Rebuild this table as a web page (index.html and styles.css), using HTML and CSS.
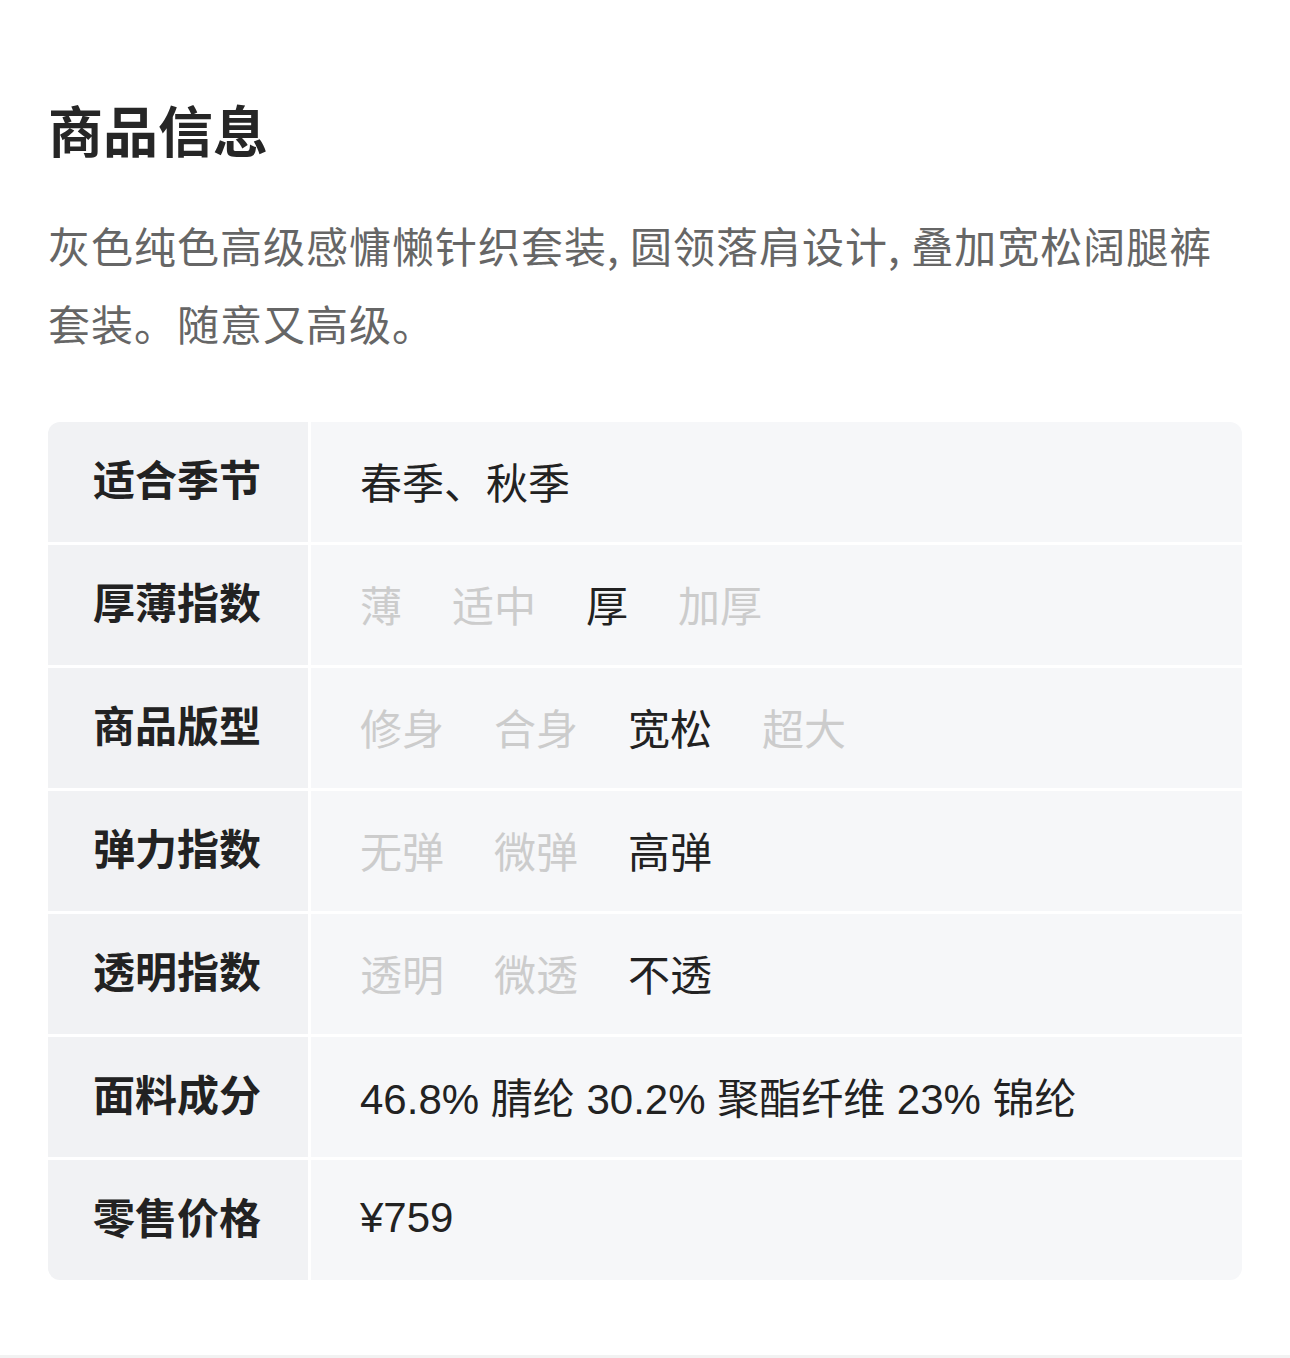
FILE: index.html
```html
<!DOCTYPE html>
<html lang="zh-CN">
<head>
<meta charset="utf-8">
<title>商品信息</title>
<link rel="stylesheet" href="styles.css">
</head>
<body>
<main class="page">
  <h1 class="title">商品信息</h1>
  <p class="desc">灰色纯色高级感慵懒针织套装, 圆领落肩设计, 叠加宽松阔腿裤套装。随意又高级。</p>
  <div class="table">
    <div class="label">适合季节</div>
    <div class="value">春季、秋季</div>

    <div class="label">厚薄指数</div>
    <div class="value options">
      <span class="opt">薄</span><span class="opt">适中</span><span class="opt on">厚</span><span class="opt">加厚</span>
    </div>

    <div class="label">商品版型</div>
    <div class="value options">
      <span class="opt">修身</span><span class="opt">合身</span><span class="opt on">宽松</span><span class="opt">超大</span>
    </div>

    <div class="label">弹力指数</div>
    <div class="value options">
      <span class="opt">无弹</span><span class="opt">微弹</span><span class="opt on">高弹</span>
    </div>

    <div class="label">透明指数</div>
    <div class="value options">
      <span class="opt">透明</span><span class="opt">微透</span><span class="opt on">不透</span>
    </div>

    <div class="label">面料成分</div>
    <div class="value latin">46.8% 腈纶 30.2% 聚酯纤维 23% 锦纶</div>

    <div class="label">零售价格</div>
    <div class="value latin">¥759</div>
  </div>
  <div class="divider"></div>
</main>
</body>
</html>
```

FILE: styles.css
```css
html, body {
  margin: 0;
  padding: 0;
  background: #ffffff;
}

body {
  font-family: "Noto Sans CJK SC", "Noto Sans", sans-serif;
  color: #222222;
}

.page {
  padding: 96px 0 0;
}

.title {
  margin: 0 48px;
  font-size: 55px;
  line-height: 64px;
  font-weight: 700;
  color: #262626;
}

.desc {
  margin: 46px 48px 0;
  font-size: 42px;
  line-height: 78px;
  letter-spacing: 1px;
  color: #666666;
}

.table {
  margin: 60px 48px 0;
  display: grid;
  grid-template-columns: 260px 1fr;
  grid-auto-rows: 120px;
  gap: 3px;
  border-radius: 12px;
  overflow: hidden;
  background: #ffffff;
}

.label {
  background: #f1f2f4;
  display: flex;
  align-items: center;
  padding: 0 0 10px 45px;
  font-size: 42px;
  font-weight: 700;
  color: #222222;
}

.value {
  background: #f6f7f9;
  display: flex;
  align-items: center;
  padding: 0 0 4px 49px;
  font-size: 42px;
  color: #222222;
}

.latin {
  font-family: "Liberation Sans", "Noto Sans CJK SC", sans-serif;
}

.options {
  gap: 50px;
}

.opt {
  color: #cccccc;
}

.opt.on {
  color: #222222;
}

.divider {
  margin-top: 75px;
  height: 10px;
  background: #f2f2f2;
}
```
